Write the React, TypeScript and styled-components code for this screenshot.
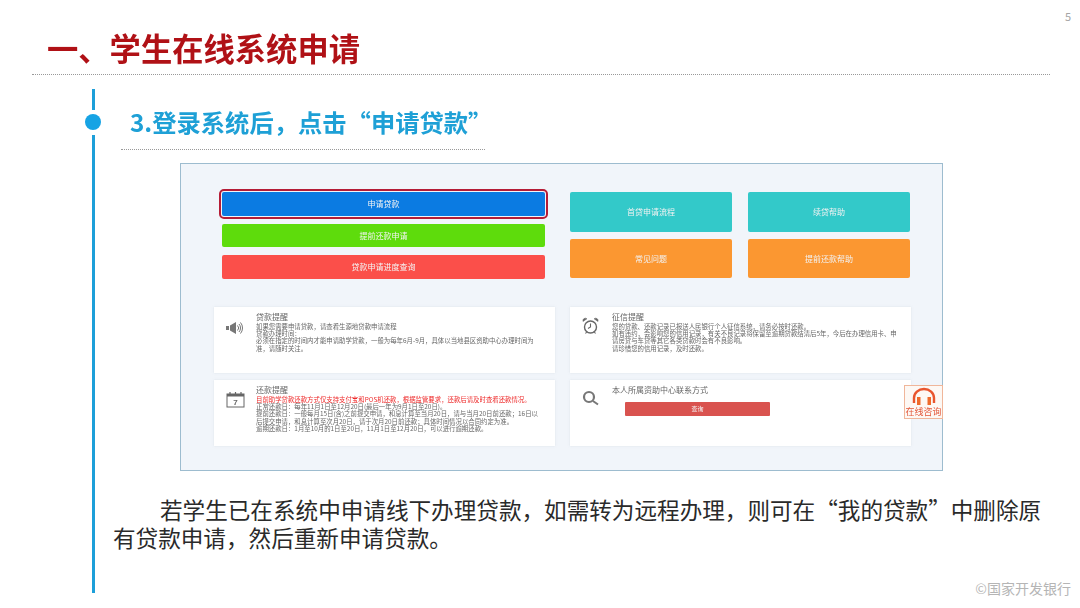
import React from 'react';
import styled, { createGlobalStyle } from 'styled-components';

const Global = createGlobalStyle`
  html, body {
    margin: 0;
    padding: 0;
    background: #fff;
  }
  * {
    box-sizing: border-box;
  }
`;

const Slide = styled.div`
  position: relative;
  width: 1080px;
  height: 608px;
  overflow: hidden;
  background: #fff;
  font-family: 'Noto Sans CJK SC', 'Liberation Sans', sans-serif;
  display: flex;
  flex-direction: column;
`;

const PageNo = styled.span`
  position: absolute;
  top: 9px;
  right: 9px;
  font-size: 11px;
  line-height: 14px;
  color: #a5a5a5;
`;

const Title = styled.h1`
  margin: 31px 0 0 47px;
  font-size: 31.3px;
  line-height: 33px;
  font-weight: 700;
  color: #b01116;
  filter: blur(0.3px);
`;

const Rule = styled.div`
  margin: 10px 30px 0 32px;
  border-top: 1px dotted #999;
`;

const Body = styled.div`
  margin: 14px 0 0 85px;
  height: 504px;
  display: flex;
  gap: 12px;
`;

const Rail = styled.div`
  width: 16px;
  display: flex;
  flex-direction: column;
  align-items: center;
`;

const RailLine = styled.div<{ $grow?: boolean }>`
  width: 3px;
  flex: ${(p) => (p.$grow ? '1' : '0 0 21px')};
  background: #1d9fd9;
`;

const RailDot = styled.div`
  width: 16px;
  height: 16px;
  margin: 4px 0 5px;
  border-radius: 50%;
  background: #16a3e4;
`;

const Content = styled.div`
  display: flex;
  flex-direction: column;
`;

const SubHead = styled.h2`
  margin: 0 0 0 8px;
  width: 364px;
  height: 61px;
  padding: 16px 0 0 9px;
  border-bottom: 1px dotted #999;
  font-size: 24.3px;
  line-height: 34px;
  font-weight: 700;
  color: #1ea0d6;
  white-space: nowrap;
  filter: blur(0.3px);
`;

const Panel = styled.div`
  position: relative;
  width: 763px;
  height: 308px;
  margin: 13px 0 0 67px;
  padding: 28px 0 0 33px;
  border: 1px solid #9dbccf;
  background: #f1f5fa;
  display: grid;
  grid-template-columns: 341px 341px;
  grid-template-rows: 108px 66px 66px;
  column-gap: 15px;
  row-gap: 7px;
  filter: blur(0.35px);
  align-content: start;
`;

const Stack = styled.div`
  display: flex;
  flex-direction: column;
  gap: 8px;
  padding-left: 8px;
`;

const WideButton = styled.div<{ $bg: string; $ring?: boolean }>`
  width: 323px;
  height: 23.5px;
  border-radius: 2px;
  background: ${(p) => p.$bg};
  color: #f4f4f4;
  font-size: 8px;
  line-height: 23.5px;
  text-align: center;
  ${(p) => p.$ring && 'outline: 2px solid #b51c36; outline-offset: 1.5px;'}
`;

const Tiles = styled.div`
  display: grid;
  grid-template-columns: 162px 162px;
  grid-auto-rows: 39.5px;
  gap: 7px 16px;
  align-content: start;
`;

const Tile = styled.div<{ $bg: string }>`
  border-radius: 2px;
  background: ${(p) => p.$bg};
  color: #f2f2f2;
  font-size: 8px;
  display: flex;
  align-items: center;
  justify-content: center;
`;

const Card = styled.div`
  background: #fff;
  display: grid;
  grid-template-columns: 42px 1fr;
  padding: 5px 12px 0 0;
  box-shadow: 0 0 2px rgba(200, 210, 220, 0.5);
`;

const CardIcon = styled.div`
  padding: 4px 0 0 12px;
`;

const CardTitle = styled.div`
  font-size: 8px;
  line-height: 10px;
  margin-bottom: 1px;
  color: #666;
`;

const CardLine = styled.div<{ $red?: boolean }>`
  font-size: 6.4px;
  line-height: 7.2px;
  color: ${(p) => (p.$red ? '#ee2a2a' : '#666')};
`;

const QueryButton = styled.div`
  width: 145px;
  height: 14px;
  margin: 7px 0 0 13px;
  border-radius: 1px;
  background: #d9534f;
  color: #f6f6f6;
  font-size: 6px;
  line-height: 14px;
  text-align: center;
`;

const HelpWidget = styled.div`
  position: absolute;
  top: 221px;
  right: -1px;
  width: 39px;
  height: 34px;
  border: 1px solid #f0b69a;
  background: #fdf8f4;
  display: flex;
  flex-direction: column;
  align-items: center;
  padding-top: 1px;
`;

const HelpGlyph = styled.div`
  height: 19px;
`;

const HelpLabel = styled.span`
  margin-top: 1px;
  font-size: 9px;
  line-height: 10px;
  color: #e2573a;
  white-space: nowrap;
`;

const Note = styled.p`
  width: 933px;
  margin: 25px 0 0;
  font-size: 22.6px;
  line-height: 28px;
  text-indent: 47px;
  color: #2a2a2a;
`;

const Watermark = styled.span`
  position: absolute;
  right: 9px;
  bottom: 11px;
  font-size: 14px;
  line-height: 18px;
  color: #b5b5b5;
`;

const SpeakerIcon = () => (
  <svg width="18" height="14" viewBox="0 0 18 14" fill="none">
    <path d="M0 5h3v4H0zM4 4.500L10 1v12L4 9.500z" fill="#777" />
    <path d="M11.500 4.500a3.500 3.500 0 0 1 0 5M13 3a6 6 0 0 1 0 8M14.500 1.500a8.500 8.500 0 0 1 0 11" stroke="#777" strokeWidth="1" />
  </svg>
);

const ClockIcon = () => (
  <svg width="17" height="18" viewBox="0 0 17 18" fill="none" stroke="#666">
    <circle cx="8.500" cy="10" r="6" strokeWidth="1.400" />
    <path d="M8.500 6.500V10l-2.500 1.500M3.500 16.500l1.500-2M13.500 16.500l-1.500-2" strokeWidth="1.100" />
    <path d="M1 4.500A2.500 2.500 0 0 1 5 1.800zM16 4.500a2.500 2.500 0 0 0-4-2.700z" fill="#666" strokeWidth="0.500" />
  </svg>
);

const CalendarIcon = () => (
  <svg width="19" height="17" viewBox="0 0 19 17" fill="none">
    <rect x="1" y="3" width="17" height="13" stroke="#666" strokeWidth="1" />
    <path d="M1 3h17v2.500H1z" fill="#666" />
    <path d="M4 1v3M9.500 1v3M15 1v3" stroke="#666" strokeWidth="1.200" />
    <text x="9.500" y="13.800" fontSize="8" fontWeight="700" textAnchor="middle" fill="#666" fontFamily="Liberation Sans">7</text>
  </svg>
);

const SearchIcon = () => (
  <svg width="18" height="18" viewBox="0 0 18 18" fill="none" stroke="#777">
    <circle cx="7" cy="7" r="5" strokeWidth="2.200" />
    <path d="M11 11l5 3.500" strokeWidth="2" />
  </svg>
);

const HeadsetIcon = () => (
  <svg width="26" height="19" viewBox="0 0 26 19" fill="none">
    <path d="M3 16V11a10 9 0 0 1 20 0v5" stroke="#e9552e" strokeWidth="2.400" />
    <rect x="6" y="10" width="3.500" height="8" fill="#ef6a2b" />
    <rect x="16.500" y="10" width="3.500" height="8" fill="#ef6a2b" />
  </svg>
);

const App = () => {
  return (
    <Slide>
      <Global />
      <PageNo>5</PageNo>
      <Title>一、学生在线系统申请</Title>
      <Rule />
      <Body>
        <Rail>
          <RailLine />
          <RailDot />
          <RailLine $grow />
        </Rail>
        <Content>
          <SubHead>3.登录系统后，点击“申请贷款”</SubHead>
          <Panel>
            <Stack>
              <WideButton $bg="#0b7be2" $ring>申请贷款</WideButton>
              <WideButton $bg="#5edc0c">提前还款申请</WideButton>
              <WideButton $bg="#fb4f4a">贷款申请进度查询</WideButton>
            </Stack>
            <Tiles>
              <Tile $bg="#33c9c9">首贷申请流程</Tile>
              <Tile $bg="#33c9c9">续贷帮助</Tile>
              <Tile $bg="#fb9731">常见问题</Tile>
              <Tile $bg="#fb9731">提前还款帮助</Tile>
            </Tiles>
            <Card>
              <CardIcon><SpeakerIcon /></CardIcon>
              <div>
                <CardTitle>贷款提醒</CardTitle>
                <CardLine>如果您需要申请贷款，请查看生源地贷款申请流程</CardLine>
                <CardLine>贷款办理时间：</CardLine>
                <CardLine>必须在指定的时间内才能申请助学贷款，一般为每年6月-9月，具体以当地县区资助中心办理时间为准，请随时关注。</CardLine>
              </div>
            </Card>
            <Card>
              <CardIcon><ClockIcon /></CardIcon>
              <div>
                <CardTitle>征信提醒</CardTitle>
                <CardLine>您的贷款、还款记录已报送人民银行个人征信系统，请务必按时还款。</CardLine>
                <CardLine>如有违约，会影响您的信用记录，有关不良记录将保留至逾期贷款结清后5年，今后在办理信用卡、申请房贷与车贷等其它各类贷款时会有不良影响。</CardLine>
                <CardLine>请珍惜您的信用记录，及时还款。</CardLine>
              </div>
            </Card>
            <Card>
              <CardIcon><CalendarIcon /></CardIcon>
              <div>
                <CardTitle>还款提醒</CardTitle>
                <CardLine $red>目前助学贷款还款方式仅支持支付宝和POS机还款，根据监管要求，还款后请及时查看还款情况。</CardLine>
                <CardLine>正常还款日：每年11月1日至12月20日(最后一年为9月1日至20日)。</CardLine>
                <CardLine>提前还款日：一般每月15日(含)之前提交申请，和息计算至当月20日，请与当月20日前还款；16日以后提交申请，和息计算至次月20日，请于次月20日前还款；具体时间情况以合同约定为准。</CardLine>
                <CardLine>逾期还款日：1月至10月的1日至20日，11月1日至12月20日，可以进行逾期还款。</CardLine>
              </div>
            </Card>
            <Card>
              <CardIcon><SearchIcon /></CardIcon>
              <div>
                <CardTitle>本人所属资助中心联系方式</CardTitle>
                <QueryButton>查询</QueryButton>
              </div>
            </Card>
            <HelpWidget>
              <HelpGlyph><HeadsetIcon /></HelpGlyph>
              <HelpLabel>在线咨询</HelpLabel>
            </HelpWidget>
          </Panel>
          <Note>若学生已在系统中申请线下办理贷款，如需转为远程办理，则可在“我的贷款”中删除原有贷款申请，然后重新申请贷款。</Note>
        </Content>
      </Body>
      <Watermark>©国家开发银行</Watermark>
    </Slide>
  );
};

export default App;
